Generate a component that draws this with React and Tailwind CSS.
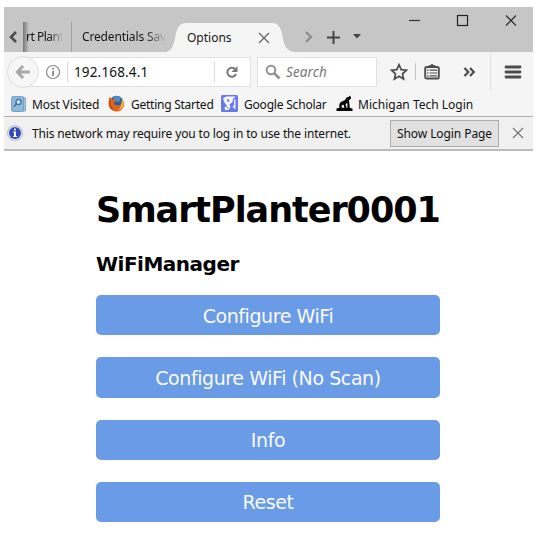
import React from "react";

const ink = "#4c4c4c";

function TabStrip() {
  return (
    <div className="flex h-[45px] bg-[#c6c6c6] text-[12px] text-[#151515]">
      <div className="flex h-[45px] w-[19px] shrink-0 items-center pt-[15px]">
        <svg width="19" height="30" viewBox="0 0 19 30" fill="none">
          <path d="M12 10 L7 15 L12 20" stroke={ink} strokeWidth="2.6" />
        </svg>
      </div>
      <div className="mt-[15px] flex h-[30px] w-[49px] shrink-0 items-center whitespace-nowrap border-r border-[#a0a0a0]">
        <div className="h-[30px] w-[6px] shrink-0 bg-gradient-to-r from-[#777777] to-[#c6c6c6]" />
        <span className="-ml-[3px] bg-gradient-to-r from-[#151515] from-60% to-[#c6c6c6] bg-clip-text tracking-[-0.5px] text-transparent">
          rt Plant
        </span>
      </div>
      <div className="mt-[15px] flex h-[30px] w-[94px] shrink-0 items-center pl-[10px]">
        <span className="whitespace-nowrap bg-gradient-to-r from-[#151515] from-75% to-[#c6c6c6] bg-clip-text tracking-[-0.15px] text-transparent">
          Credentials Sav
        </span>
      </div>
      <div className="mt-[16px] flex h-[29px] w-[128px] shrink-0">
        <svg width="20" height="29" viewBox="0 0 20 29" fill="#f5f5f5">
          <path d="M0 29 C6 28 8 21 9.500 13 C11 4 14 0 20 0 V29 Z" />
        </svg>
        <div className="flex w-[86px] items-center bg-[#f5f5f5]">
          <span className="ml-[1px] w-[70px]">Options</span>
          <svg width="12" height="12" viewBox="0 0 12 12" className="ml-[1px] shrink-0" fill="none">
            <path d="M1 1 L11 11 M11 1 L1 11" stroke="#666" strokeWidth="1.300" />
          </svg>
        </div>
        <svg width="22" height="29" viewBox="0 0 22 29" fill="#f5f5f5">
          <path d="M0 0 C6 0 9 4 10.500 13 C12 22 14 28 22 29 H0 Z" />
        </svg>
      </div>
      <svg width="84" height="30" viewBox="0 0 84 30" className="mt-[15px] shrink-0" fill="none">
        <path d="M12 10 L17 15 L12 20" stroke="#8b8b8b" strokeWidth="2.200" />
        <path d="M33 15.500 H46 M39.500 9 V22" stroke="#444" strokeWidth="2" />
        <path d="M59 12 H67 L63 16.500 Z" fill="#444" />
      </svg>
      <svg width="151" height="30" viewBox="0 0 151 30" className="shrink-0" fill="none">
        <path d="M31 13.500 H42" stroke="#333" strokeWidth="1.200" />
        <rect x="79.500" y="8.500" width="10" height="10" stroke="#222" strokeWidth="1.200" />
        <path d="M128 8.500 L138 18.500 M138 8.500 L128 18.500" stroke="#333" strokeWidth="1.300" />
      </svg>
    </div>
  );
}

function NavBar() {
  return (
    <div className="flex h-[39px] items-center">
      <div className="z-10 ml-[3px] flex h-[32px] w-[32px] shrink-0 items-center justify-center rounded-full border border-[#dedede] bg-[#f7f7f7]">
        <svg width="16" height="16" viewBox="0 0 16 16" fill="none">
          <path d="M8 2 L2.500 8 L8 14 M3 8 H15" stroke="#aaaaaa" strokeWidth="3.200" />
        </svg>
      </div>
      <div className="-ml-[16px] flex h-[30px] w-[228px] shrink-0 items-center border border-[#e2e2e2] bg-white">
        <svg width="16" height="16" viewBox="0 0 16 16" className="ml-[21px] shrink-0" fill="none">
          <circle cx="8" cy="8" r="6.500" stroke="#888" strokeWidth="1.200" />
          <path d="M8 7 V12" stroke="#777" strokeWidth="1.600" />
          <circle cx="8" cy="4.800" r="1" fill="#777" />
        </svg>
        <div className="ml-[6px] h-[20px] w-px shrink-0 bg-[#d8d8d8]" />
        <span className="ml-[6px] w-[140px] pt-[2px] text-[13.500px] tracking-[0.150px] text-[#111]">192.168.4.1</span>
        <div className="h-[20px] w-px shrink-0 bg-[#d8d8d8]" />
        <svg width="14" height="14" viewBox="0 0 14 14" className="ml-[10px] shrink-0" fill="none">
          <path d="M10 4 A4.500 4.500 0 1 0 11 9" stroke="#777" strokeWidth="2" />
          <path d="M12.500 1 V7 H6.500 Z" fill="#777" />
        </svg>
      </div>
      <div className="ml-[6px] flex h-[30px] w-[120px] shrink-0 items-center border border-[#e2e2e2] bg-white">
        <svg width="16" height="16" viewBox="0 0 16 16" className="ml-[7px] shrink-0" fill="none">
          <circle cx="6" cy="6" r="4.300" stroke="#929292" strokeWidth="2" />
          <path d="M9 9 L14.500 14.500" stroke="#929292" strokeWidth="2.600" />
        </svg>
        <span className="ml-[5px] pt-[2px] text-[13.500px] italic tracking-[0.100px] text-[#777]">Search</span>
      </div>
      <svg width="18" height="18" viewBox="0 0 18 18" className="ml-[13px] shrink-0" fill="none">
        <path d="M9 1.700 L11.200 6.600 L16.400 7.200 L12.500 10.800 L13.600 16 L9 13.300 L4.400 16 L5.500 10.800 L1.600 7.200 L6.800 6.600 Z" stroke={ink} strokeWidth="1.700" />
      </svg>
      <div className="ml-[7px] h-[17px] w-px shrink-0 bg-[#c4c4c4]" />
      <svg width="16" height="17" viewBox="0 0 16 17" className="ml-[8px] shrink-0" fill="none">
        <rect x="1.200" y="4" width="13.600" height="11.500" rx="1.600" stroke={ink} strokeWidth="1.900" />
        <path d="M4.500 4 L5 2.500 H6.500 L8 1 L9.500 2.500 H11 L11.500 4 Z" fill={ink} stroke={ink} strokeWidth="0.800" />
        <path d="M3 7.200 H4.600 M5.600 7.200 H13 M3 10 H4.600 M5.600 10 H13 M3 12.800 H4.600 M5.600 12.800 H13" stroke={ink} strokeWidth="1.200" />
      </svg>
      <svg width="14" height="12" viewBox="0 0 14 12" className="ml-[23px] shrink-0" fill="none">
        <path d="M1.500 2 L5.300 6 L1.500 10 M7 2 L10.800 6 L7 10" stroke={ink} strokeWidth="2.200" />
      </svg>
      <div className="ml-[13px] h-[37px] w-px shrink-0 bg-[#e1e1e1]" />
      <svg width="18" height="14" viewBox="0 0 18 14" className="ml-[13px] shrink-0" fill="none">
        <path d="M2 2 H16 M2 7 H16 M2 12 H16" stroke={ink} strokeWidth="2.800" strokeLinecap="round" />
      </svg>
    </div>
  );
}

function Bookmarks() {
  return (
    <div className="flex h-[26px] items-center whitespace-nowrap border-b border-[#b0b0b0] text-[12px] text-[#111]">
      <svg width="16" height="16" viewBox="0 0 16 16" className="ml-[7px] shrink-0" fill="none">
        <path d="M3 2 H14.500 V15 H3 Z" fill="#b7cfe5" stroke="#8aabc8" />
        <rect x="0.700" y="0.700" width="12" height="14.600" rx="1" fill="#8fb9df" stroke="#7099bd" />
        <circle cx="7.500" cy="6" r="2.600" fill="#c7def0" stroke="#416f9f" strokeWidth="1.300" />
        <path d="M5.500 8 L3 10.500" stroke="#416f9f" strokeWidth="1.600" />
      </svg>
      <span className="ml-[5px] w-[76px] shrink-0 pt-[2px] tracking-[-0.150px]">Most Visited</span>
      <svg width="17" height="17" viewBox="0 0 17 17" className="shrink-0">
        <circle cx="8.500" cy="8" r="7.200" fill="#2b5f9e" />
        <path d="M5 2 Q9 -0.500 13 3 L11 7 L7 6 Z" fill="#4d8fc6" />
        <path d="M1.500 2 L4.500 4 Q7 4 8 6 L6 7.500 Q6 10 9 10.500 Q12 11 13.500 8 L13.500 4 Q17 8 15.500 12 Q13 17 8 16.500 Q1 16 0.500 9 Q0.300 5 1.500 2 Z" fill="#e0651a" />
        <path d="M14 4.500 Q16.500 8 15 11.500 Q13 15 10 15.500 Q14 12 14 4.500 Z" fill="#f8c33a" />
        <path d="M2 5 Q1 11 5 14" stroke="#bd4d18" strokeWidth="1.500" fill="none" />
      </svg>
      <span className="ml-[6px] w-[90px] shrink-0 pt-[2px] tracking-[-0.250px]">Getting Started</span>
      <svg width="17" height="17" viewBox="0 0 17 17" className="shrink-0">
        <rect width="17" height="17" rx="1.500" fill="#6879ea" />
        <path d="M2 3.500 L5 1.500 H14.500 L12 4 L11.500 7 L8.500 9.500 L9.500 12 L7.500 15 H4 L3.500 12.500 L6.500 11 L4 8.500 Z" fill="#f7f8ff" />
        <path d="M5.500 4 L8 4.500 L8.500 7 L6.500 6.500 Z M5.500 12.500 L7.500 12 L7 14 Z" fill="#6879ea" />
        <path d="M13 5 L14.500 4 V14.500 L11.500 12 L13 10 Z" fill="#e8ebff" />
      </svg>
      <span className="ml-[6px] w-[92px] shrink-0 pt-[2px] tracking-[-0.200px]">Google Scholar</span>
      <svg width="17" height="17" viewBox="0 0 17 17" className="shrink-0" fill="#050505">
        <path d="M0.500 16 V13.500 L3.500 12.800 Q2.500 9 5 7 L9 5 L10.500 2.500 L13 1.800 L13.500 0.500 L15 2 L14.800 4 L13 5 L13.800 13 L16.500 13.500 V16 Z M5.500 10.500 L5.800 12.800 H8.500 L7.500 9.500 Z M9.500 9 L10.500 12.800 L11.400 12.800 L11.400 8 Z" fillRule="evenodd" />
      </svg>
      <span className="ml-[5px] pt-[2px]">Michigan Tech Login</span>
    </div>
  );
}

function Notification() {
  return (
    <div className="flex h-[34px] items-center whitespace-nowrap border-b-2 border-[#bcbcbc] bg-[#f0f0f0] text-[12px] text-[#111]">
      <svg width="16" height="16" viewBox="0 0 16 16" className="ml-[3px] shrink-0">
        <circle cx="8" cy="8" r="7.800" fill="#a9adb7" />
        <circle cx="8" cy="8" r="7" fill="#e8ebf2" />
        <circle cx="8" cy="8" r="6" fill="#3348bd" />
        <path d="M6 6.500 H9 V11 H10.200 V12 H6 V11 H7 V7.500 H6 Z" fill="#fff" />
        <circle cx="8" cy="4.500" r="1.100" fill="#fff" />
      </svg>
      <span className="ml-[9px] w-[358px] shrink-0 pt-px tracking-[-0.150px]">
        This network may require you to log in to use the internet.
      </span>
      <button className="h-[27px] w-[109px] shrink-0 border border-[#acacac] bg-[#e1e1e1] p-0 pt-px tracking-[-0.080px]">
        Show Login Page
      </button>
      <svg width="12" height="12" viewBox="0 0 12 12" className="ml-[13px] shrink-0" fill="none">
        <path d="M1 1 L11 11 M11 1 L1 11" stroke="#777" strokeWidth="1.200" />
      </svg>
    </div>
  );
}

const actions = ["Configure WiFi", "Configure WiFi (No Scan)", "Info", "Reset"];

export default function App() {
  return (
    <div className="h-[556px] w-[540px] overflow-hidden bg-white pl-[4px] pt-[7px]">
      <div className="w-[529px] bg-[#f5f5f5] font-['Noto_Sans','Open_Sans',sans-serif]">
        <TabStrip />
        <NavBar />
        <Bookmarks />
        <Notification />
      </div>
      <main className="ml-[92px] w-[344px] whitespace-nowrap font-['DejaVu_Sans',Verdana,sans-serif] text-black">
        <h1 className="mt-[37px] h-[44px] text-[35px] font-bold leading-[44px] tracking-[-1.050px]">SmartPlanter0001</h1>
        <h3 className="mt-[19px] h-[26px] text-[20px] font-bold leading-[26px] tracking-[-0.500px]">WiFiManager</h3>
        <div className="mt-[18.4px] flex flex-col gap-[22px]">
          {actions.map((label) => (
            <button
              key={label}
              className="h-[40.1px] w-full rounded-[5px] bg-[#699be7] pt-[2px] text-[19px] tracking-[-0.420px] text-[#fafafa]"
            >
              {label}
            </button>
          ))}
        </div>
      </main>
    </div>
  );
}
